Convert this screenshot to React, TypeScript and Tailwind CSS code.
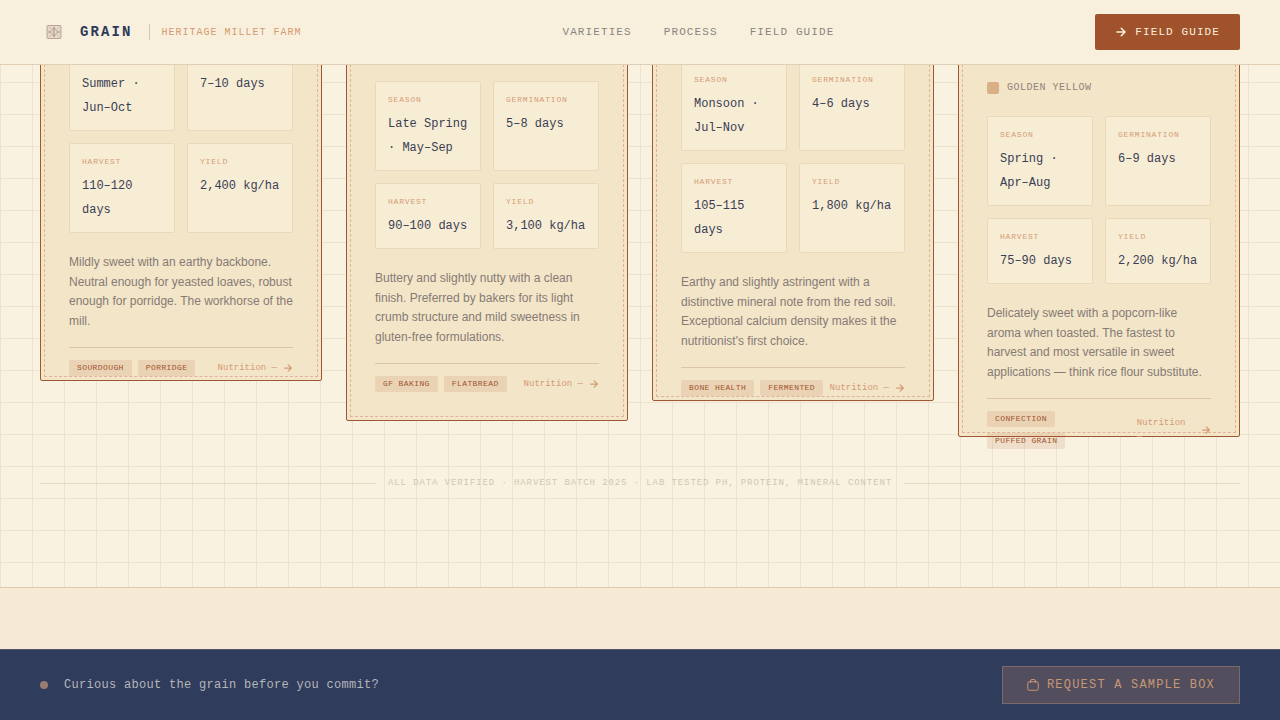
import React from 'react'

const mono = `font-['Liberation_Mono',monospace]`

const links = [`Varieties`, `Process`, `Field Guide`]

const cards = [
  {
    layout: `h-[341px]`,
    swatch: null,
    stats: [
      [`Season`, `Summer · Jun–Oct`],
      [`Germination`, `7–10 days`],
      [`Harvest`, `110–120 days`],
      [`Yield`, `2,400 kg/ha`],
    ],
    notes: `Mildly sweet with an earthy backbone. Neutral enough for yeasted loaves, robust enough for porridge. The workhorse of the mill.`,
    tags: [`Sourdough`, `Porridge`],
  },
  {
    layout: `h-[381px] pt-10`,
    swatch: null,
    stats: [
      [`Season`, `Late Spring · May–Sep`],
      [`Germination`, `5–8 days`],
      [`Harvest`, `90–100 days`],
      [`Yield`, `3,100 kg/ha`],
    ],
    notes: `Buttery and slightly nutty with a clean finish. Preferred by bakers for its light crumb structure and mild sweetness in gluten-free formulations.`,
    tags: [`GF Baking`, `Flatbread`],
  },
  {
    layout: `h-[361px] pt-5`,
    swatch: null,
    stats: [
      [`Season`, `Monsoon · Jul–Nov`],
      [`Germination`, `4–6 days`],
      [`Harvest`, `105–115 days`],
      [`Yield`, `1,800 kg/ha`],
    ],
    notes: `Earthy and slightly astringent with a distinctive mineral note from the red soil. Exceptional calcium density makes it the nutritionist's first choice.`,
    tags: [`Bone Health`, `Fermented`],
  },
  {
    layout: `h-[397px] pt-[39px]`,
    swatch: `Golden Yellow`,
    stats: [
      [`Season`, `Spring · Apr–Aug`],
      [`Germination`, `6–9 days`],
      [`Harvest`, `75–90 days`],
      [`Yield`, `2,200 kg/ha`],
    ],
    notes: `Delicately sweet with a popcorn-like aroma when toasted. The fastest to harvest and most versatile in sweet applications — think rice flour substitute.`,
    tags: [`Confection`, `Puffed Grain`],
  },
]

const Arrow = ({ className }: { className: string }) => (
  <svg
    className={className}
    viewBox="0 0 12 12"
    fill="none"
    stroke="currentColor"
    strokeLinecap="round"
    strokeLinejoin="round"
    aria-hidden="true"
  >
    <path d="M2 6h8M6.250 2.250 10 6l-3.750 3.750" />
  </svg>
)

const Logo = () => (
  <svg
    className="size-7 shrink-0 text-[#a08a80]"
    viewBox="0 0 28 28"
    fill="none"
    stroke="currentColor"
    aria-hidden="true"
  >
    <rect x="7" y="7.5" width="14" height="13" rx="1" fill="#e6d7c6" strokeOpacity=".7" />
    <path d="m14 10 4 4-4 4-4-4z" strokeOpacity=".6" />
    <path d="M14 9v10" strokeOpacity=".9" />
    <path d="M8 14h3M17 14h3" strokeOpacity=".8" />
    <path d="m9 9 2 2M19 9l-2 2M9 19l2-2M19 19l-2-2" strokeOpacity=".3" />
  </svg>
)

const Bag = () => (
  <svg
    className="size-3 shrink-0"
    viewBox="0 0 12 12"
    fill="none"
    stroke="currentColor"
    strokeLinejoin="round"
    aria-hidden="true"
  >
    <rect x="0.75" y="2.75" width="10.5" height="8.5" rx="1.5" />
    <path d="M3.5 4V2a1.5 1.5 0 0 1 1.5-1.5h2A1.5 1.5 0 0 1 8.500 2v2" />
  </svg>
)

const Header = () => (
  <header className="sticky top-0 z-10 flex h-[65px] items-center justify-between border-b border-[#e0cfb5] bg-[#f8f0dd] px-10">
    <div className="flex items-center gap-3">
      <Logo />
      <span className="text-sm font-bold tracking-[0.15em] text-[#2d3a5a]">
        GRAIN
      </span>
      <span className="ml-1 h-4 w-px bg-[#dcc4a8]" />
      <span className="text-[10px] tracking-widest text-[#d49a70]">
        HERITAGE MILLET FARM
      </span>
    </div>
    <nav className="flex gap-8">
      {links.map((link) => (
        <a
          key={link}
          href="#"
          className="text-[11px] tracking-widest text-[#8a8481] uppercase"
        >
          {link}
        </a>
      ))}
    </nav>
    <button className="flex h-9 items-center gap-2 rounded-xs bg-[#a0522d] px-5 text-[11px] tracking-widest text-[#faf0dc]">
      <Arrow className="size-3 stroke-[1.5]" />
      FIELD GUIDE
    </button>
  </header>
)

const Card = ({ card }: { card: (typeof cards)[number] }) => (
  <article
    className={`relative rounded-xs border border-[#a0562f] bg-[#f3e5c8] px-7 ${card.layout}`}
  >
    <div className="pointer-events-none absolute inset-[3px] border border-dashed border-[#dfb596]" />
    {card.swatch ? (
      <div className="mb-5 flex items-center gap-2">
        <span className="size-3 rounded-xs bg-[#dbaf85]" />
        <span className="text-[10px] leading-4 tracking-wider text-[#8f827b] uppercase">
          {card.swatch}
        </span>
      </div>
    ) : null}
    <dl className="grid grid-cols-2 gap-3">
      {card.stats.map(([label, value]) => (
        <div
          key={label}
          className="rounded-xs border border-[#ead9b9] bg-[#f7edd5] px-3 pt-3 pb-2.5"
        >
          <dt className="mb-1.5 text-[8px] leading-3 tracking-widest text-[#d69b75] uppercase">
            {label}
          </dt>
          <dd className="text-xs leading-6 text-[#3a3d54]">{value}</dd>
        </div>
      ))}
    </dl>
    <p className="mt-5 mb-4 font-['Liberation_Sans',sans-serif] text-xs leading-relaxed text-[#857b75]">
      {card.notes}
    </p>
    <div className="flex items-center justify-between border-t border-[#dcc5a5] pt-3">
      <div className="flex flex-wrap gap-1.5">
        {card.tags.map((tag) => (
          <span
            key={tag}
            className="rounded-xs bg-[#b0522d]/12 px-2 py-0.5 text-[8px] leading-3 tracking-wider text-[#a0522d] uppercase"
          >
            {tag}
          </span>
        ))}
      </div>
      <a
        href="#"
        className="flex items-center gap-1.5 text-[9px] leading-[14px] text-[#d39a76]"
      >
        Nutrition —
        <Arrow className="size-2.5 shrink-0 stroke-[1.5]" />
      </a>
    </div>
  </article>
)

const App = () => (
  <div className={`flex min-h-screen flex-col bg-[#f6ead5] ${mono}`}>
    <Header />
    <main className="flow-root border-b border-[#dfcbb0] bg-[#f9f2e0] bg-[linear-gradient(to_right,#ece3cf_1px,transparent_1px),linear-gradient(to_bottom,#ece3cf_1px,transparent_1px)] bg-size-[32px_32px] bg-position-[0_17px] px-10 pb-[98px]">
      <div className="-mt-[25px] grid grid-cols-4 items-start gap-6">
        {cards.map((card) => (
          <Card key={card.notes} card={card} />
        ))}
      </div>
      <div className="mt-10 flex items-center gap-3">
        <span className="h-px flex-1 bg-[#e6d9bf]" />
        <span className="text-[9px] leading-3 tracking-widest text-[#d0c7b3]">
          ALL DATA VERIFIED · HARVEST BATCH 2025 · LAB TESTED PH, PROTEIN,
          MINERAL CONTENT
        </span>
        <span className="h-px flex-1 bg-[#e6d9bf]" />
      </div>
    </main>
    <footer className="mt-auto flex items-center justify-between border-t border-[#50526a] bg-[#303c5c] px-10 py-4">
      <div className="flex items-center gap-4">
        <span className="size-2 rounded-full bg-[#9a7c70]" />
        <p className="text-xs tracking-wide text-[#b5b6ba]">
          Curious about the grain before you commit?
        </p>
      </div>
      <button className="flex items-center gap-2 border border-[#7c6a69] bg-[#534e5e] px-6 py-[10px] text-xs tracking-widest text-[#c79774]">
        <Bag />
        REQUEST A SAMPLE BOX
      </button>
    </footer>
  </div>
)

export default App
